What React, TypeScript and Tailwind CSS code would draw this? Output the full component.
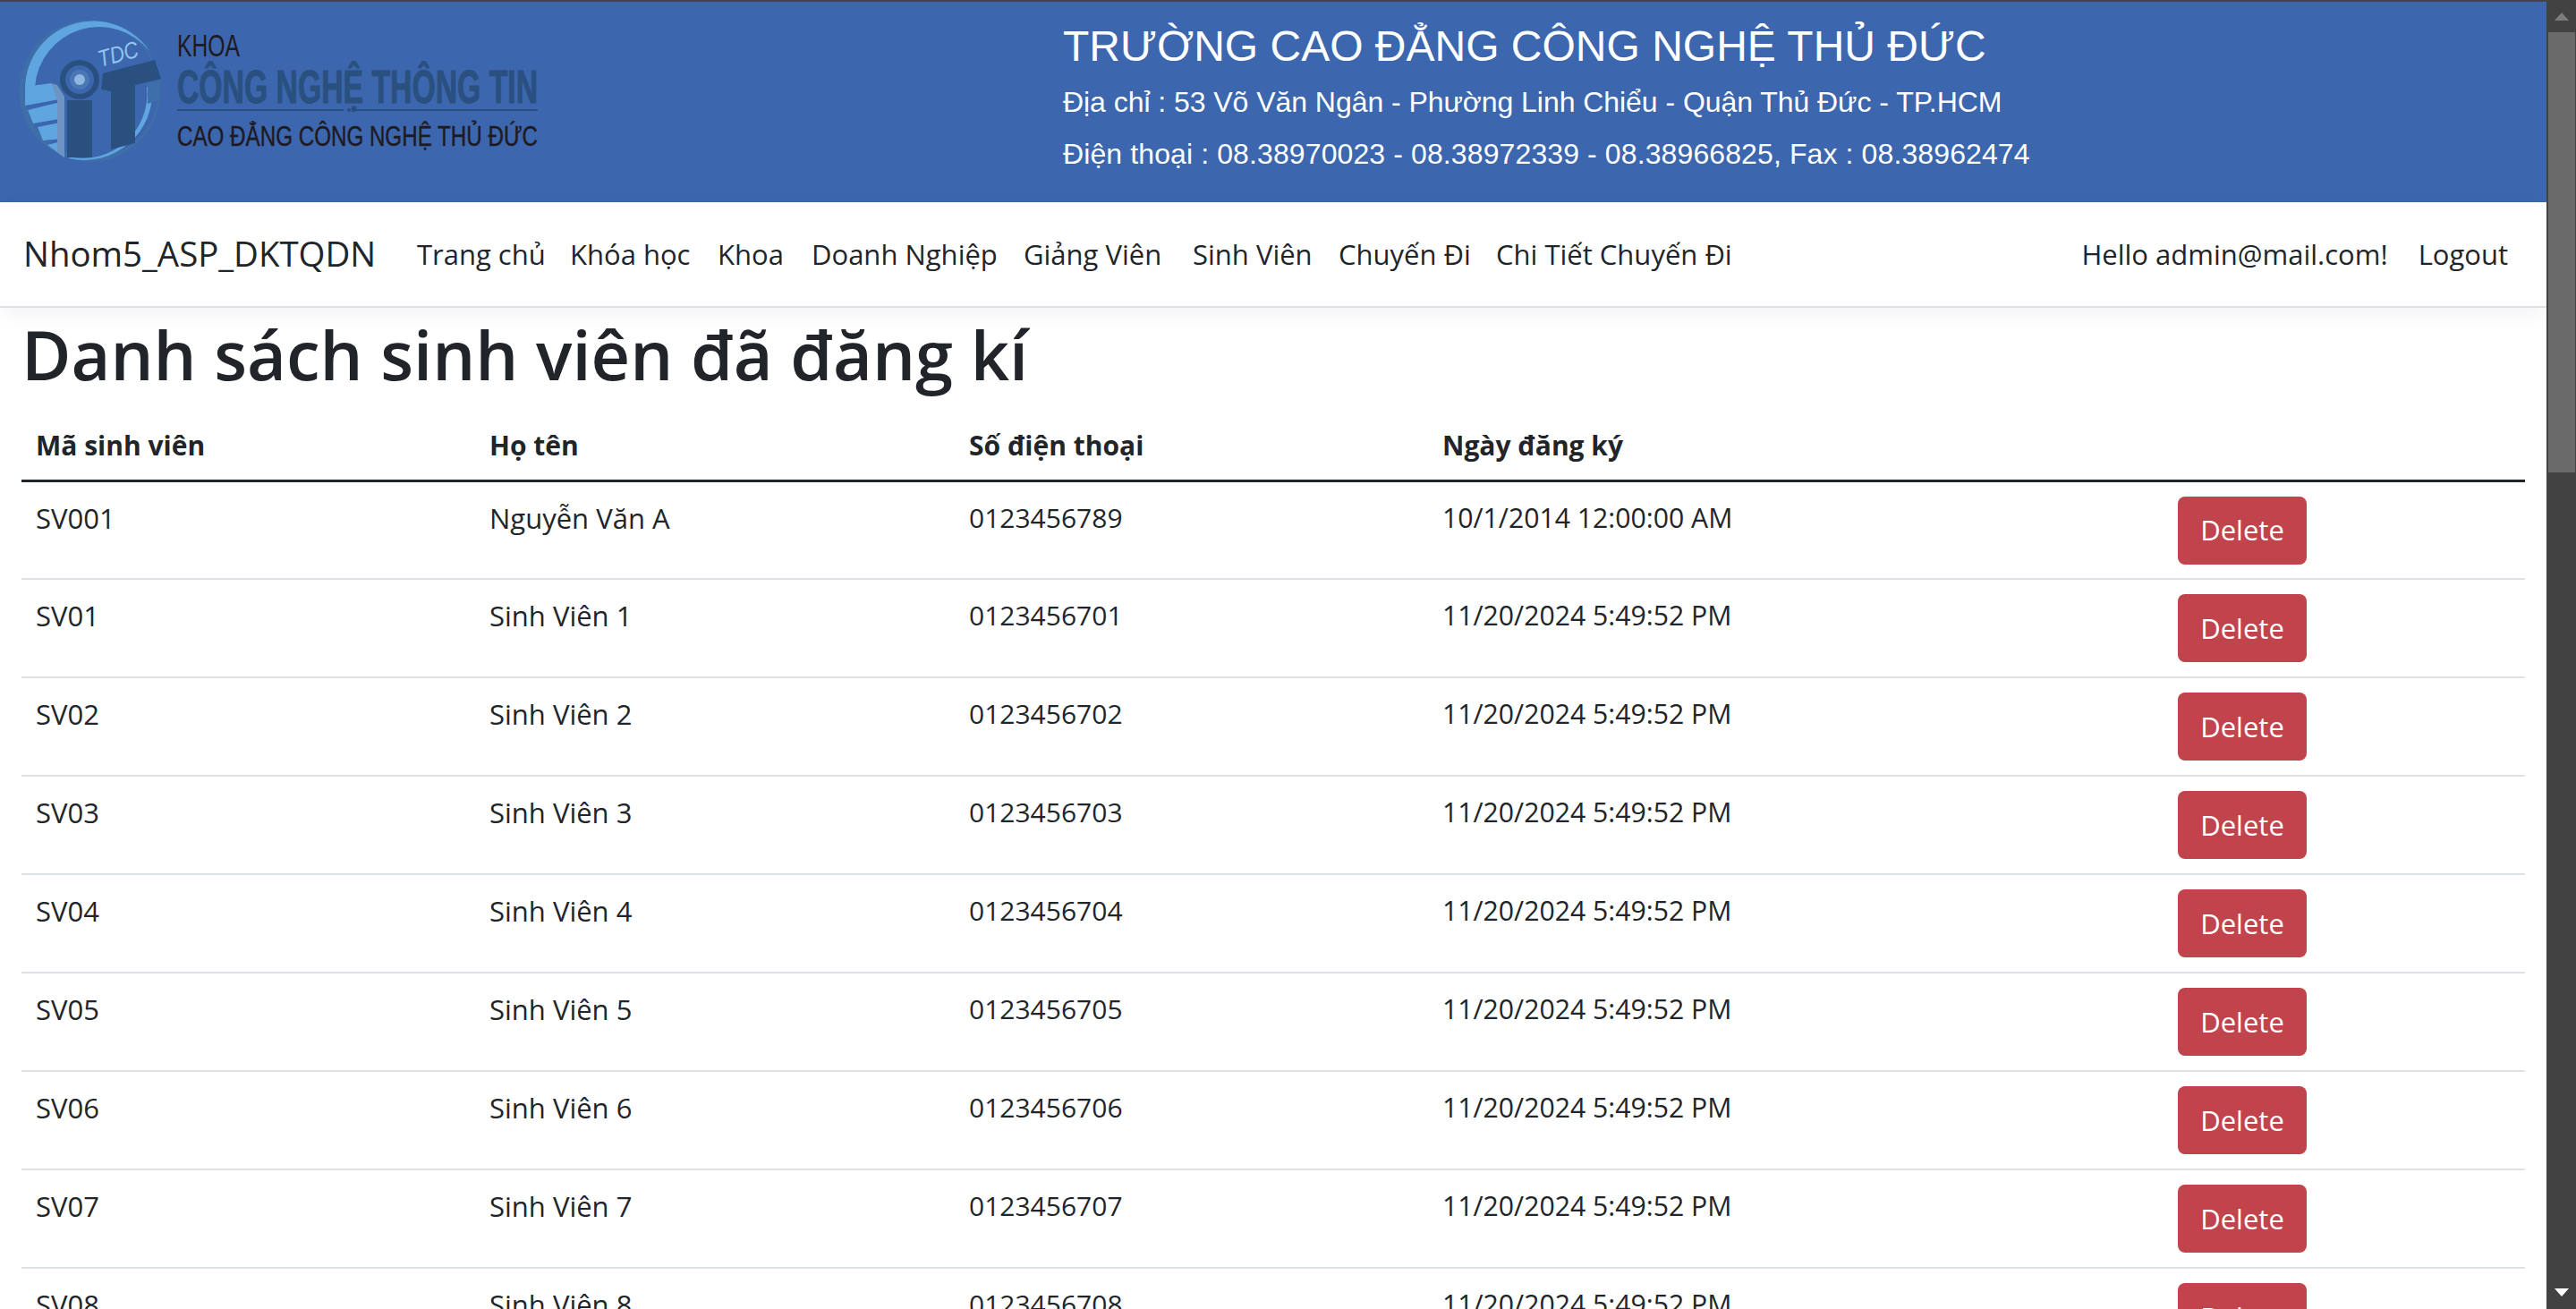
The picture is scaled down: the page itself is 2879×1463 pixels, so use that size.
const navItems = [
  ["Trang chủ", "w-[171px]"],
  ["Khóa học", "w-[165px]"],
  ["Khoa", "w-[105px]"],
  ["Doanh Nghiệp", "w-[237px]"],
  ["Giảng Viên", "w-[189px]"],
  ["Sinh Viên", "w-[163px]"],
  ["Chuyến Đi", "w-[176px]"],
  ["Chi Tiết Chuyến Đi", "w-[270px]"],
];

const rows = [
  ["SV001", "Nguyễn Văn A", "0123456789", "10/1/2014 12:00:00 AM"],
  ["SV01", "Sinh Viên 1", "0123456701", "11/20/2024 5:49:52 PM"],
  ["SV02", "Sinh Viên 2", "0123456702", "11/20/2024 5:49:52 PM"],
  ["SV03", "Sinh Viên 3", "0123456703", "11/20/2024 5:49:52 PM"],
  ["SV04", "Sinh Viên 4", "0123456704", "11/20/2024 5:49:52 PM"],
  ["SV05", "Sinh Viên 5", "0123456705", "11/20/2024 5:49:52 PM"],
  ["SV06", "Sinh Viên 6", "0123456706", "11/20/2024 5:49:52 PM"],
  ["SV07", "Sinh Viên 7", "0123456707", "11/20/2024 5:49:52 PM"],
  ["SV08", "Sinh Viên 8", "0123456708", "11/20/2024 5:49:52 PM"],
];

function Logo() {
  return (
    <svg width="620" height="224" viewBox="0 2 620 224" className="shrink-0">
      <circle cx="100.5" cy="101.5" r="79" fill="#3f6fa8" />
      <circle cx="102" cy="101" r="75" fill="#3c66ad" />
      <path d="M28 97 A76 76 0 0 1 167 57 A72 72 0 0 0 39 97 Z" fill="#5fa6e0" />
      <path d="M170 97 A76 76 0 0 1 77 177 L76 175 A72 72 0 0 0 164 97 Z" fill="#5fa6e0" />
      <polygon points="28,97 57,93 72,110 28,118" fill="#5fa6e0" />
      <polygon points="31,123 72,113 72,132 37,138" fill="#5fa6e0" />
      <polygon points="42,142 72,136 72,155 48,157" fill="#5fa6e0" />
      <polygon points="53,162 72,157 72,176" fill="#5fa6e0" />
      <polygon points="57,93 64,95 72,108 72,176 64,170 64,112" fill="#6d93c2" />
      <polygon points="165,93 180,91 177,112 165,116" fill="#3f6fa8" />
      <polygon points="115,82 173,67 180,88 151,95 151,160 124,167 124,102 113,100" fill="#2a5080" />
      <rect x="75" y="112" width="28" height="64" fill="#2a5080" />
      <circle cx="89" cy="89" r="22" fill="#2a5080" />
      <circle cx="89" cy="89" r="16" fill="#3c66ad" />
      <circle cx="89" cy="89" r="11" fill="#4a78b4" />
      <circle cx="89" cy="89" r="6" fill="#8fb6de" />
      <text x="0" y="0" transform="translate(112 75) rotate(-15)" fontFamily="'Liberation Sans', sans-serif" fontStyle="italic" fontSize="26" fill="#8ec4ee" textLength="46" lengthAdjust="spacingAndGlyphs">TDC</text>
      <text x="198" y="63" fontFamily="'Liberation Sans', sans-serif" fontSize="35" fill="#1f1a22" textLength="70" lengthAdjust="spacingAndGlyphs">KHOA</text>
      <text x="198" y="115" fontFamily="'Liberation Sans', sans-serif" fontWeight="700" fontSize="52" fill="#2a5080" stroke="#2a5080" strokeWidth="1" textLength="403" lengthAdjust="spacingAndGlyphs">CÔNG NGHỆ THÔNG TIN</text>
      <rect x="198" y="122" width="186" height="2" fill="#2a5080" />
      <circle cx="390" cy="123" r="2" fill="#2a5080" />
      <rect x="396" y="122" width="205" height="2" fill="#2a5080" />
      <text x="198" y="163" fontFamily="'Liberation Sans', sans-serif" fontSize="32" fill="#1f1a22" stroke="#1f1a22" strokeWidth="0.4" textLength="403" lengthAdjust="spacingAndGlyphs">CAO ĐẲNG CÔNG NGHỆ THỦ ĐỨC</text>
    </svg>
  );
}

export default function App() {
  return (
    <div className="flex h-screen w-full overflow-hidden bg-white font-['Open_Sans',sans-serif] text-[#212529]">
      <main className="min-w-0 flex-1 overflow-hidden">
        <div className="h-[2px] bg-[#444444]" />
        <header className="flex h-[224px] bg-[#3c66ad] text-white">
          <Logo />
          <div className="pl-[568px] pt-[21px] font-['Liberation_Sans',sans-serif]">
            <div className="h-[63px] whitespace-nowrap text-[48px] leading-[58px]">TRƯỜNG CAO ĐẲNG CÔNG NGHỆ THỦ ĐỨC</div>
            <div className="h-[58px] whitespace-nowrap text-[32px] leading-[57px] tracking-[-0.05px]">Địa chỉ : 53 Võ Văn Ngân - Phường Linh Chiểu - Quận Thủ Đức - TP.HCM</div>
            <div className="h-[57px] whitespace-nowrap text-[32px] leading-[57px] tracking-[0.11px]">Điện thoại : 08.38970023 - 08.38972339 - 08.38966825, Fax : 08.38962474</div>
          </div>
        </header>
        <nav className="relative z-10 flex h-[118px] items-center border-b-2 border-[#dee2e6] bg-white pl-[26px] pr-[43px] text-[31px] shadow-[0_8px_24px_rgba(0,0,0,0.05)]">
          <span className="w-[440px] shrink-0 whitespace-nowrap text-[38.4px]">Nhom5_ASP_DKTQDN</span>
          {navItems.map(([label, width]) => (
            <span key={label} className={`whitespace-nowrap ${width} shrink-0`}>{label}</span>
          ))}
          <span className="ml-auto whitespace-nowrap">Hello admin@mail.com!</span>
          <span className="ml-[34px] whitespace-nowrap">Logout</span>
        </nav>
        <div className="px-[24px]">
          <h1 className="whitespace-nowrap pt-[4px] text-[75.7px] font-semibold leading-[96px]">Danh sách sinh viên đã đăng kí</h1>
          <table className="mt-[15px] w-[2798px] table-fixed border-collapse text-[30px]">
            <colgroup>
              <col className="w-[507px]" />
              <col className="w-[536px]" />
              <col className="w-[529px]" />
              <col className="w-[822px]" />
              <col className="w-[404px]" />
            </colgroup>
            <thead>
              <tr className="h-[78px] border-b-[3px] border-[#212529] text-left">
                <th className="px-[16px] font-bold">Mã sinh viên</th>
                <th className="px-[16px] font-bold">Họ tên</th>
                <th className="px-[16px] font-bold">Số điện thoại</th>
                <th className="px-[16px] font-bold">Ngày đăng ký</th>
                <th />
              </tr>
            </thead>
            <tbody>
              {rows.map((r) => (
                <tr key={r[0]} className="h-[110px] border-b-2 border-[#dee2e6] align-top">
                  <td className="whitespace-nowrap px-[16px] pt-[16px] text-[31px] leading-[48px]">{r[0]}</td>
                  <td className="whitespace-nowrap px-[16px] pt-[16px] text-[31px] leading-[48px]">{r[1]}</td>
                  <td className="whitespace-nowrap px-[16px] pt-[16px] leading-[48px]">{r[2]}</td>
                  <td className="whitespace-nowrap px-[16px] pt-[16px] text-[30.2px] leading-[48px]">{r[3]}</td>
                  <td className="px-[16px] pt-[16px]">
                    <button className="h-[76px] w-[144px] rounded-[8px] bg-[#c1444c] text-center text-[31px] text-white">Delete</button>
                  </td>
                </tr>
              ))}
            </tbody>
          </table>
        </div>
      </main>
      <aside className="flex h-full w-[33px] shrink-0 flex-col items-center bg-[#424242]">
        <div className="flex h-[36px] w-full items-center justify-center">
          <svg width="16" height="9" viewBox="0 0 16 9"><polygon points="8,0 16,9 0,9" fill="#7c7c7c" /></svg>
        </div>
        <div className="h-[492px] w-[30px] bg-[#6a6a6a]" />
        <div className="flex-1" />
        <div className="flex h-[36px] w-full items-center justify-center pb-[2px]">
          <svg width="16" height="9" viewBox="0 0 16 9"><polygon points="0,0 16,0 8,9" fill="#ffffff" /></svg>
        </div>
      </aside>
    </div>
  );
}
